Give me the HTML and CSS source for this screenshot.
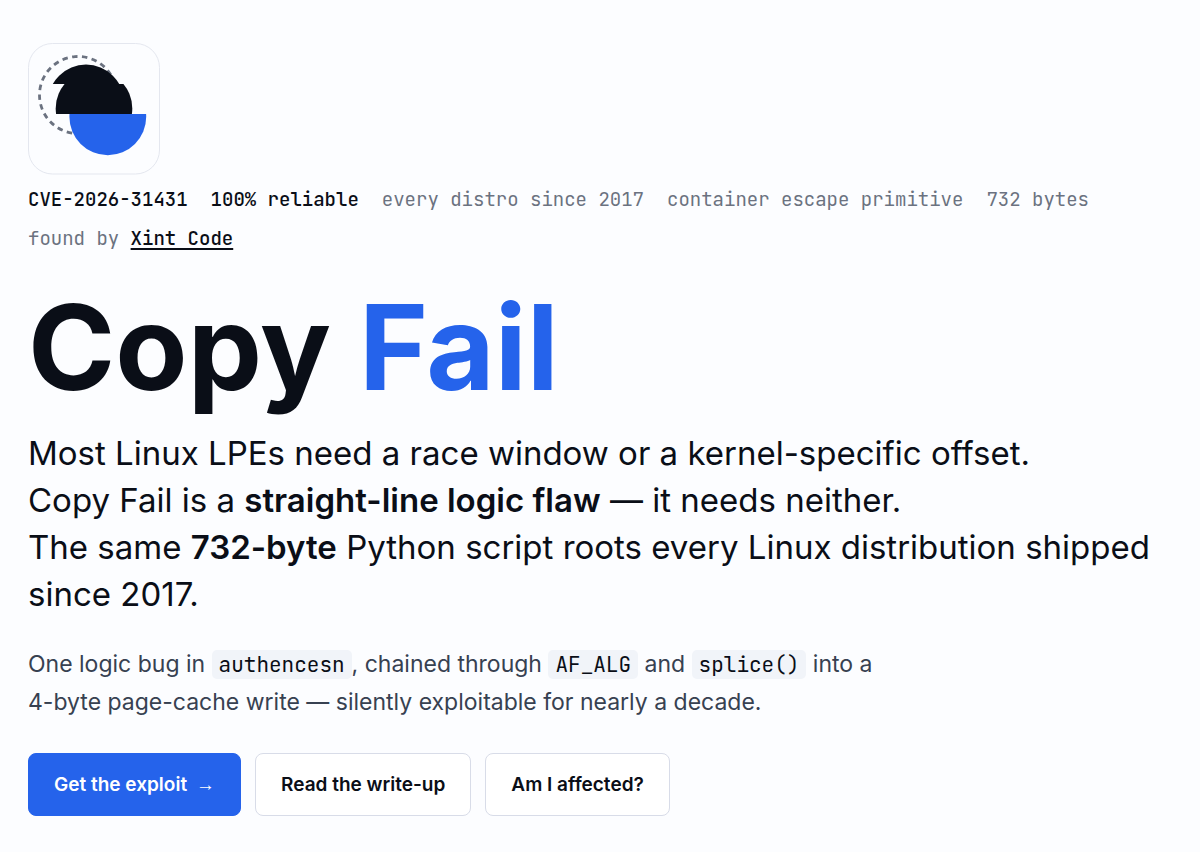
FILE: index.html
```html
<!DOCTYPE html>
<html lang="en">
<head>
<meta charset="utf-8">
<meta name="viewport" content="width=device-width, initial-scale=1">
<title>Copy Fail</title>
<link rel="stylesheet" href="styles.css">
</head>
<body>
<main class="hero">
  <svg class="logo" viewBox="0 0 132 132" aria-hidden="true">
    <defs>
      <clipPath id="slice-top"><rect x="0" y="0" width="132" height="41"/></clipPath>
      <clipPath id="slice-middle"><rect x="0" y="41" width="132" height="30"/></clipPath>
      <clipPath id="slice-bottom"><rect x="0" y="71" width="132" height="61"/></clipPath>
    </defs>
    <rect x=".5" y=".5" width="131" height="130.5" rx="24" fill="#fcfdff" stroke="#e4e7ef"/>
    <circle cx="50" cy="52" r="38.5" fill="none" stroke="#6b7280" stroke-width="2.8" stroke-dasharray="5.5 4.4" transform="rotate(-4.5 50 52)"/>
    <circle cx="58" cy="59.5" r="38" fill="#0a0e17" clip-path="url(#slice-top)"/>
    <circle cx="66" cy="65.5" r="38.3" fill="#0a0e17" clip-path="url(#slice-middle)"/>
    <circle cx="79.8" cy="73.8" r="38.4" fill="#2563eb" clip-path="url(#slice-bottom)"/>
  </svg>

  <ul class="facts">
    <li class="strong">CVE-2026-31431</li>
    <li class="strong">100% reliable</li>
    <li>every distro since 2017</li>
    <li>container escape primitive</li>
    <li>732 bytes</li>
    <li>found by <a class="credit" href="#xint">Xint Code</a></li>
  </ul>

  <h1 class="title">Copy <span class="accent">Fail</span></h1>

  <p class="lede">Most Linux LPEs need a race window or a kernel-specific offset.<br>Copy Fail is a <strong>straight-line logic flaw</strong> — it needs neither.<br>The same <strong>732-byte</strong> Python script roots every Linux distribution shipped since 2017.</p>

  <p class="summary">One logic bug in <code>authencesn</code>, chained through <code>AF_ALG</code> and <code>splice()</code> into a 4-byte page-cache write — silently exploitable for nearly a decade.</p>

  <nav class="actions">
    <a class="button primary" href="#exploit">Get the exploit <span class="arrow">→</span></a>
    <a class="button" href="#write-up">Read the write-up</a>
    <a class="button" href="#affected">Am I affected?</a>
  </nav>
</main>
</body>
</html>
```

FILE: styles.css
```css
* { box-sizing: border-box; }

body {
  margin: 0;
  background: #fcfdff;
  color: #0a0e17;
  font-family: Inter, "Liberation Sans", sans-serif;
}

.hero { padding: 43px 28px 36px; }

.logo { display: block; width: 132px; height: 132px; }

.facts {
  display: flex;
  flex-wrap: wrap;
  gap: 8px 23px;
  margin: 9px 0 0;
  padding: 0;
  list-style: none;
  color: #6b7280;
  font-family: "JetBrains Mono", "DejaVu Sans Mono", monospace;
  font-size: 19px;
  line-height: 31px;
}

.strong { color: #0a0e17; font-weight: 500; }

.credit {
  color: #0a0e17;
  font-weight: 500;
  text-decoration: underline;
  text-decoration-thickness: 2px;
  text-underline-offset: 3px;
}

.title {
  margin: 33px 0 0;
  font-size: 118px;
  font-weight: 700;
  line-height: 120px;
}

.accent { color: #2563eb; }

.lede {
  margin: 23px 0 0;
  font-size: 33px;
  line-height: 47px;
}

.lede strong { font-weight: 600; }

.summary {
  max-width: 860px;
  margin: 27px 0 0;
  color: #374151;
  font-size: 23px;
  line-height: 38px;
}

.summary code {
  padding: 1px 7px;
  border-radius: 5px;
  background: #f1f4f9;
  color: #0a0e17;
  font-family: "JetBrains Mono", "DejaVu Sans Mono", monospace;
  font-size: 21px;
  line-height: 21px;
}

.actions {
  display: flex;
  flex-wrap: wrap;
  gap: 14px;
  margin-top: 32px;
}

.button {
  display: inline-flex;
  align-items: center;
  gap: 9px;
  padding: 15px 25px;
  border: 1px solid #d8dce8;
  border-radius: 8px;
  background: #fff;
  color: #0a0e17;
  font-size: 19px;
  font-weight: 600;
  line-height: 31px;
  text-decoration: none;
}

.primary { border-color: #2563eb; background: #2563eb; color: #fff; }

.arrow { font-family: "Liberation Sans", Arial, sans-serif; font-weight: 400; }
```
